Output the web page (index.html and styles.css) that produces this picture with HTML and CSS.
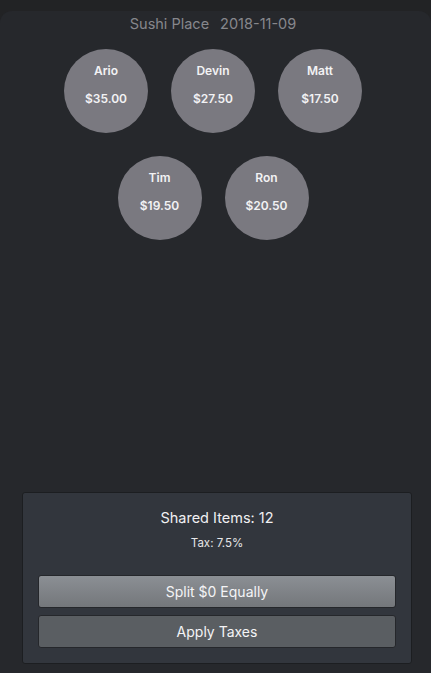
FILE: index.html
```html
<!DOCTYPE html>
<html>
<head>
<meta charset="utf-8">
<link rel="stylesheet" href="styles.css">
</head>
<body>
<div class="topbar"></div>
<main class="screen">
  <h1 class="title"><span>Sushi Place</span><span>2018-11-09</span></h1>
  <div class="people">
    <div class="row">
      <div class="person"><div class="name">Ario</div><div class="amount">$35.00</div></div>
      <div class="person"><div class="name">Devin</div><div class="amount">$27.50</div></div>
      <div class="person"><div class="name">Matt</div><div class="amount">$17.50</div></div>
    </div>
    <div class="row">
      <div class="person"><div class="name">Tim</div><div class="amount">$19.50</div></div>
      <div class="person"><div class="name">Ron</div><div class="amount">$20.50</div></div>
    </div>
  </div>
  <section class="panel">
    <div class="shared">Shared Items: 12</div>
    <div class="tax">Tax: 7.5%</div>
    <button class="btn btn-split">Split $0 Equally</button>
    <button class="btn btn-tax">Apply Taxes</button>
  </section>
</main>
</body>
</html>
```
FILE: styles.css
```css
html, body {
  margin: 0;
  padding: 0;
  background: #222325;
  font-family: "Inter", "Liberation Sans", sans-serif;
}
.topbar {
  height: 11px;
  background: #222325;
}
.screen {
  height: 662px;
  background: #26282c;
  border-radius: 12px 12px 0 0;
  display: flex;
  flex-direction: column;
  box-sizing: border-box;
}
.title {
  margin: 5px 0 0;
  padding-right: 5px;
  font-size: 14.5px;
  font-weight: 400;
  color: #86878c;
  text-align: center;
  display: flex;
  justify-content: center;
  gap: 11px;
  line-height: 16px;
}
.people {
  margin-top: 17px;
  padding-right: 5px;
  display: flex;
  flex-direction: column;
  gap: 23px;
}
.row {
  display: flex;
  justify-content: center;
  gap: 23px;
}
.person {
  width: 84px;
  height: 84px;
  border-radius: 50%;
  background: #7a7980;
  color: #f2f2f4;
  font-weight: 600;
  font-size: 12px;
  display: flex;
  flex-direction: column;
  align-items: center;
  padding-top: 15px;
  box-sizing: border-box;
}
.name { line-height: 14px; }
.amount { line-height: 14px; margin-top: 14px; }
.panel {
  margin: auto 19px 9px 22px;
  height: 172px;
  box-sizing: border-box;
  background: #32363d;
  border: 1px solid #1c1e21;
  border-radius: 3px;
  display: flex;
  flex-direction: column;
  align-items: center;
  padding: 16px 16px 0;
}
.shared {
  font-size: 14.5px;
  color: #f0f0f2;
  line-height: 18px;
}
.tax {
  font-size: 11.5px;
  color: #e6e6e8;
  margin-top: 9px;
  line-height: 14px;
}
.btn {
  width: 358px;
  height: 33px;
  border-radius: 3px;
  border: 1px solid #25272b;
  font-family: inherit;
  font-size: 14px;
  color: #f4f4f6;
  box-sizing: border-box;
  padding: 0;
}
.btn-split {
  margin-top: 25px;
  background: linear-gradient(#8b8f94, #74777b);
}
.btn-tax {
  margin-top: 7px;
  background: #5a5e62;
}
```
